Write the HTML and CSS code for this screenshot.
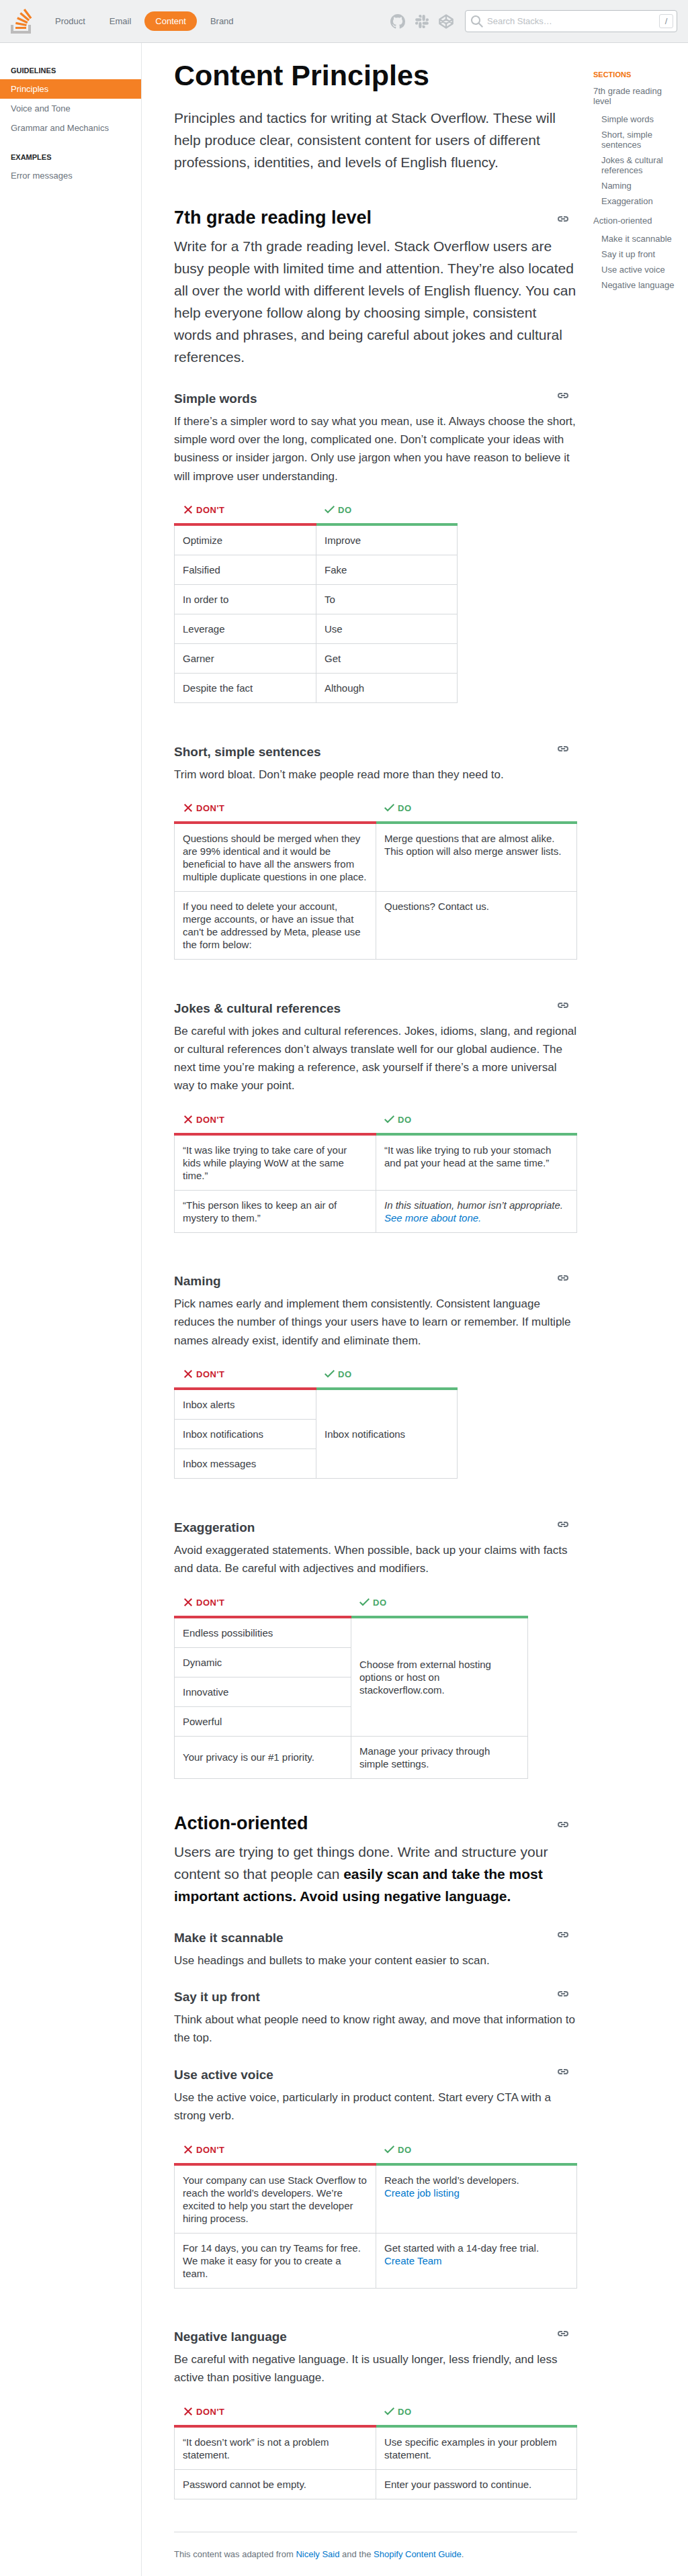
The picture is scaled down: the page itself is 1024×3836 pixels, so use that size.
FILE: index.html
```html
<!DOCTYPE html>
<html lang="en">
<head>
<meta charset="utf-8">
<title>Content Principles</title>
<link rel="stylesheet" href="styles.css">
</head>
<body>
<svg class="sprite" width="0" height="0" aria-hidden="true">
  <symbol id="link" viewBox="0 0 18 18"><path d="M2.9 9c0-1.16.94-2.1 2.1-2.1h3V5H5a4 4 0 100 8h3v-1.9H5A2.1 2.1 0 012.9 9zM13 5h-3v1.9h3a2.1 2.1 0 010 4.2h-3V13h3a4 4 0 000-8zm-7 5h6V8H6v2z"/></symbol>
  <symbol id="clear" viewBox="0 0 18 18"><path d="M15 4.41L13.59 3 9 7.59 4.41 3 3 4.41 7.59 9 3 13.59 4.41 15 9 10.41 13.59 15 15 13.59 10.41 9 15 4.41z"/></symbol>
  <symbol id="check" viewBox="0 0 18 18"><path d="M16 4.41L14.59 3 6 11.59 2.41 8 1 9.41l5 5 10-10z"/></symbol>
</svg>

<header class="topbar">
  <a class="logo" href="#">
    <svg width="32" height="37" viewBox="0 0 32 37"><path d="M26 33v-9h4v13H0V24h4v9h22z" fill="#bcbbbb"/><path d="M21.5 0l-2.7 2 9.9 13.3 2.7-2L21.5 0zM26 18.4L13.3 7.8l2.1-2.5 12.7 10.6-2.1 2.5zM9.1 15.2l15 7 1.4-3-15-7-1.4 3zm14 10.79l.68-2.95-16.1-3.35L7 23l16.1 2.99zM23 30H7v-3h16v3z" fill="#f48024"/></svg>
  </a>
  <nav class="topnav">
    <a href="#">Product</a>
    <a href="#">Email</a>
    <a class="is-selected" href="#">Content</a>
    <a href="#">Brand</a>
  </nav>
  <div class="social">
    <svg width="22" height="22" viewBox="0 0 16 16"><path fill="currentColor" d="M8 0C3.58 0 0 3.58 0 8c0 3.54 2.29 6.53 5.47 7.59.4.07.55-.17.55-.38 0-.19-.01-.82-.01-1.49-2.01.37-2.53-.49-2.69-.94-.09-.23-.48-.94-.82-1.13-.28-.15-.68-.52-.01-.53.63-.01 1.08.58 1.23.82.72 1.21 1.87.87 2.33.66.07-.52.28-.87.51-1.07-1.78-.2-3.64-.89-3.64-3.95 0-.87.31-1.59.82-2.15-.08-.2-.36-1.02.08-2.12 0 0 .67-.21 2.2.82.64-.18 1.32-.27 2-.27s1.36.09 2 .27c1.53-1.04 2.2-.82 2.2-.82.44 1.1.16 1.92.08 2.12.51.56.82 1.27.82 2.15 0 3.07-1.87 3.75-3.65 3.95.29.25.54.73.54 1.48 0 1.07-.01 1.93-.01 2.2 0 .21.15.46.55.38A8.01 8.01 0 0016 8c0-4.42-3.58-8-8-8z"/></svg>
    <svg width="20" height="20" viewBox="0 0 24 24"><path fill="currentColor" d="M5.04 15.16a2.53 2.53 0 11-2.52-2.52h2.52v2.52zm1.27 0a2.53 2.53 0 015.05 0v6.32a2.53 2.53 0 01-5.05 0v-6.32zM8.83 5.04a2.53 2.53 0 112.53-2.52v2.52H8.83zm0 1.27a2.53 2.53 0 010 5.05H2.52a2.53 2.53 0 010-5.05h6.31zM18.96 8.83a2.53 2.53 0 112.52 2.53h-2.52V8.83zm-1.27 0a2.53 2.53 0 01-5.05 0V2.52a2.53 2.53 0 015.05 0v6.31zM15.17 18.96a2.53 2.53 0 11-2.53 2.52v-2.52h2.53zm0-1.27a2.53 2.53 0 010-5.05h6.31a2.53 2.53 0 010 5.05h-6.31z"/></svg>
    <svg width="22" height="22" viewBox="0 0 24 24"><path fill="none" stroke="currentColor" stroke-width="2.4" stroke-linejoin="round" d="M12 1.6l10.6 6.9v7L12 22.4 1.4 15.500v-7L12 1.600zM12 22.400v-6.900M22.600 8.500L12 15.500 1.400 8.500M1.400 15.500L12 8.500l10.600 7M12 1.600v6.900"/></svg>
  </div>
  <div class="search">
    <svg width="18" height="18" viewBox="0 0 18 18"><path fill="currentColor" d="M18 16.500l-5.140-5.180h-.35a7 7 0 10-1.190 1.190v.35L16.500 18l1.500-1.500zM12 7A5 5 0 112 7a5 5 0 0110 0z"/></svg>
    <span class="search-hint">Search Stacks…</span>
    <kbd>/</kbd>
  </div>
</header>

<div class="layout">
  <nav class="sidebar">
    <h6>GUIDELINES</h6>
    <a class="is-selected" href="#">Principles</a>
    <a href="#">Voice and Tone</a>
    <a href="#">Grammar and Mechanics</a>
    <h6>EXAMPLES</h6>
    <a href="#">Error messages</a>
  </nav>

  <main class="content">
    <h1>Content Principles</h1>
    <p class="lead">Principles and tactics for writing at Stack Overflow. These will help produce clear, consistent content for users of different professions, identities, and levels of English fluency.</p>

    <div class="heading"><h2>7th grade reading level</h2><svg><use href="#link"/></svg></div>
    <p class="lead">Write for a 7th grade reading level. Stack Overflow users are busy people with limited time and attention. They’re also located all over the world with different levels of English fluency. You can help everyone follow along by choosing simple, consistent words and phrases, and being careful about jokes and cultural references.</p>

    <div class="heading sub after-lead"><h3>Simple words</h3><svg><use href="#link"/></svg></div>
    <p>If there’s a simpler word to say what you mean, use it. Always choose the short, simple word over the long, complicated one. Don’t complicate your ideas with business or insider jargon. Only use jargon when you have reason to believe it will improve user understanding.</p>
    <table class="narrow">
      <thead><tr><th class="dont"><span><svg><use href="#clear"/></svg>DON'T</span></th><th class="do"><span><svg><use href="#check"/></svg>DO</span></th></tr></thead>
      <tbody>
        <tr><td>Optimize</td><td>Improve</td></tr>
        <tr><td>Falsified</td><td>Fake</td></tr>
        <tr><td>In order to</td><td>To</td></tr>
        <tr><td>Leverage</td><td>Use</td></tr>
        <tr><td>Garner</td><td>Get</td></tr>
        <tr><td>Despite the fact</td><td>Although</td></tr>
      </tbody>
    </table>

    <div class="heading sub after-table"><h3>Short, simple sentences</h3><svg><use href="#link"/></svg></div>
    <p>Trim word bloat. Don’t make people read more than they need to.</p>
    <table>
      <thead><tr><th class="dont"><span><svg><use href="#clear"/></svg>DON'T</span></th><th class="do"><span><svg><use href="#check"/></svg>DO</span></th></tr></thead>
      <tbody>
        <tr><td>Questions should be merged when they are 99% identical and it would be beneficial to have all the answers from multiple duplicate questions in one place.</td><td>Merge questions that are almost alike. This option will also merge answer lists.</td></tr>
        <tr><td>If you need to delete your account, merge accounts, or have an issue that can't be addressed by Meta, please use the form below:</td><td>Questions? Contact us.</td></tr>
      </tbody>
    </table>

    <div class="heading sub after-table"><h3>Jokes &amp; cultural references</h3><svg><use href="#link"/></svg></div>
    <p>Be careful with jokes and cultural references. Jokes, idioms, slang, and regional or cultural references don’t always translate well for our global audience. The next time you’re making a reference, ask yourself if there’s a more universal way to make your point.</p>
    <table>
      <thead><tr><th class="dont"><span><svg><use href="#clear"/></svg>DON'T</span></th><th class="do"><span><svg><use href="#check"/></svg>DO</span></th></tr></thead>
      <tbody>
        <tr><td>“It was like trying to take care of your kids while playing WoW at the same time.”</td><td>“It was like trying to rub your stomach and pat your head at the same time.”</td></tr>
        <tr><td>“This person likes to keep an air of mystery to them.”</td><td><em>In this situation, humor isn’t appropriate. <a href="#">See more about tone.</a></em></td></tr>
      </tbody>
    </table>

    <div class="heading sub after-table"><h3>Naming</h3><svg><use href="#link"/></svg></div>
    <p>Pick names early and implement them consistently. Consistent language reduces the number of things your users have to learn or remember. If multiple names already exist, identify and eliminate them.</p>
    <table class="narrow centered">
      <thead><tr><th class="dont"><span><svg><use href="#clear"/></svg>DON'T</span></th><th class="do"><span><svg><use href="#check"/></svg>DO</span></th></tr></thead>
      <tbody>
        <tr><td>Inbox alerts</td><td rowspan="3">Inbox notifications</td></tr>
        <tr><td>Inbox notifications</td></tr>
        <tr><td>Inbox messages</td></tr>
      </tbody>
    </table>

    <div class="heading sub after-table"><h3>Exaggeration</h3><svg><use href="#link"/></svg></div>
    <p>Avoid exaggerated statements. When possible, back up your claims with facts and data. Be careful with adjectives and modifiers.</p>
    <table class="medium centered">
      <thead><tr><th class="dont"><span><svg><use href="#clear"/></svg>DON'T</span></th><th class="do"><span><svg><use href="#check"/></svg>DO</span></th></tr></thead>
      <tbody>
        <tr><td>Endless possibilities</td><td rowspan="4">Choose from external hosting options or host on stackoverflow.com.</td></tr>
        <tr><td>Dynamic</td></tr>
        <tr><td>Innovative</td></tr>
        <tr><td>Powerful</td></tr>
        <tr><td>Your privacy is our #1 priority.</td><td>Manage your privacy through simple settings.</td></tr>
      </tbody>
    </table>

    <div class="heading"><h2>Action-oriented</h2><svg><use href="#link"/></svg></div>
    <p class="lead">Users are trying to get things done. Write and structure your content so that people can <strong>easily scan and take the most important actions. Avoid using negative language.</strong></p>

    <div class="heading sub after-lead"><h3>Make it scannable</h3><svg><use href="#link"/></svg></div>
    <p>Use headings and bullets to make your content easier to scan.</p>

    <div class="heading sub"><h3>Say it up front</h3><svg><use href="#link"/></svg></div>
    <p>Think about what people need to know right away, and move that information to the top.</p>

    <div class="heading sub"><h3>Use active voice</h3><svg><use href="#link"/></svg></div>
    <p>Use the active voice, particularly in product content. Start every CTA with a strong verb.</p>
    <table>
      <thead><tr><th class="dont"><span><svg><use href="#clear"/></svg>DON'T</span></th><th class="do"><span><svg><use href="#check"/></svg>DO</span></th></tr></thead>
      <tbody>
        <tr><td>Your company can use Stack Overflow to reach the world’s developers. We’re excited to help you start the developer hiring process.</td><td>Reach the world’s developers.<br><a href="#">Create job listing</a></td></tr>
        <tr><td>For 14 days, you can try Teams for free. We make it easy for you to create a team.</td><td>Get started with a 14-day free trial.<br><a href="#">Create Team</a></td></tr>
      </tbody>
    </table>

    <div class="heading sub after-table"><h3>Negative language</h3><svg><use href="#link"/></svg></div>
    <p>Be careful with negative language. It is usually longer, less friendly, and less active than positive language.</p>
    <table>
      <thead><tr><th class="dont"><span><svg><use href="#clear"/></svg>DON'T</span></th><th class="do"><span><svg><use href="#check"/></svg>DO</span></th></tr></thead>
      <tbody>
        <tr><td>“It doesn’t work” is not a problem statement.</td><td>Use specific examples in your problem statement.</td></tr>
        <tr><td>Password cannot be empty.</td><td>Enter your password to continue.</td></tr>
      </tbody>
    </table>

    <footer>This content was adapted from <a href="#">Nicely Said</a> and the <a href="#">Shopify Content Guide</a>.</footer>
  </main>

  <nav class="toc">
    <h6>SECTIONS</h6>
    <a href="#">7th grade reading level</a>
    <div class="toc-sub">
      <a href="#">Simple words</a>
      <a href="#">Short, simple sentences</a>
      <a href="#">Jokes &amp; cultural references</a>
      <a href="#">Naming</a>
      <a href="#">Exaggeration</a>
    </div>
    <a href="#">Action-oriented</a>
    <div class="toc-sub">
      <a href="#">Make it scannable</a>
      <a href="#">Say it up front</a>
      <a href="#">Use active voice</a>
      <a href="#">Negative language</a>
    </div>
  </nav>
</div>
</body>
</html>
```
FILE: styles.css
```css
* { box-sizing: border-box; }

body {
  margin: 0;
  background: #fff;
  color: #3b4045;
  font: 13px/17px "Liberation Sans", Arial, sans-serif;
}

a { color: #0077cc; text-decoration: none; }
h1, h2, h3, h6, p { margin: 0; }
svg { display: block; flex: none; fill: currentColor; }
.sprite { position: absolute; }

/* Top bar */
.topbar {
  display: flex;
  align-items: center;
  height: 64px;
  padding: 0 16px;
  background: #eff0f1;
  border-bottom: 1px solid #d6d9dc;
}
.logo { width: 50px; }
.topnav { display: flex; gap: 4px; }
.topnav a {
  padding: 0 16px;
  border-radius: 15px;
  color: #6a737c;
  line-height: 29px;
}
.topnav .is-selected { background: #f48024; color: #fff; }
.social {
  display: flex;
  align-items: center;
  gap: 15px;
  margin-left: auto;
  margin-right: 17px;
  color: #bbc0c4;
}
.search {
  display: flex;
  align-items: center;
  width: 316px;
  height: 33px;
  padding: 0 5px 0 8px;
  background: #fff;
  border: 1px solid #bbc0c4;
  border-radius: 4px;
  color: #bbc0c4;
}
.search-hint { flex: 1; margin-left: 6px; }
kbd {
  width: 21px;
  height: 21px;
  border: 1px solid #d6d9dc;
  border-radius: 3px;
  color: #848d95;
  font: 13px/19px "Liberation Sans", Arial, sans-serif;
  text-align: center;
}

/* Page columns */
.layout {
  display: grid;
  grid-template-columns: 211px 648px 1fr;
  min-height: 3772px;
}

.sidebar { padding-top: 35px; border-right: 1px solid #e4e6e8; }
h6 { font-size: 11px; line-height: 12px; }
.sidebar h6 { margin: 0 0 7px 16px; color: #242729; }
.sidebar a + h6 { margin-top: 23px; }
.sidebar a {
  display: block;
  padding-left: 16px;
  color: #6a737c;
  line-height: 29px;
}
.sidebar .is-selected { background: #f48024; color: #fff; }

.toc {
  display: flex;
  flex-direction: column;
  width: 145px;
  padding: 41px 0 0 24px;
  line-height: 15px;
}
.toc a { color: #6a737c; }
.toc h6 { margin-bottom: 11px; color: #f2720c; }
.toc-sub {
  display: flex;
  flex-direction: column;
  gap: 8px;
  margin: 12px 0 14px;
  padding-left: 12px;
}

/* Article */
.content { padding: 24px 0 0 48px; }
h1, h2, strong { color: #0c0d0e; }
h1 { margin-bottom: 23px; font-size: 43px; line-height: 48px; }
h2 { font-size: 27px; line-height: 30px; }
h3 { font-size: 19px; line-height: 21px; }
p { font-size: 17px; line-height: 27.2px; }
.lead { font-size: 21px; line-height: 33px; }

.heading {
  display: flex;
  justify-content: space-between;
  margin: 51px 0 11px;
  padding-right: 12px;
}
.heading svg { width: 18px; height: 18px; margin-top: 8px; color: #6a737c; }
.heading.sub { height: 21px; margin: 30.4px 0 10px; }
.heading.sub svg { margin-top: -3px; }
.heading.after-lead { margin-top: 35px; }
.heading.after-table { margin-top: 61.2px; }

/* Do / don't tables */
table {
  width: 600px;
  margin-top: 17.6px;
  table-layout: fixed;
  border-collapse: separate;
  border-spacing: 0;
  font-size: 15px;
  line-height: 19px;
}
.narrow { width: 422px; }
.medium { width: 527px; }
th {
  padding: 12px;
  border-bottom: 4px solid;
  font-size: 13px;
  line-height: 15px;
  letter-spacing: .5px;
  text-align: left;
}
th:first-child { width: 301px; padding-left: 13px; }
.narrow th:first-child { width: 212px; }
.medium th:first-child { width: 264px; }
th span { display: flex; align-items: center; height: 15px; }
th svg { width: 18px; height: 18px; margin: -1px 3px 0 -1px; }
.dont { border-color: #dc3c4b; color: #c91d2e; }
.do { border-color: #5eba7d; color: #48a868; }
td {
  padding: 12px;
  border: solid #d6d9dc;
  border-width: 0 1px 1px 0;
  vertical-align: top;
}
tr td:first-child { border-left-width: 1px; }
.centered td { vertical-align: middle; }

footer {
  margin-top: 48px;
  padding: 24px 0;
  border-top: 1px solid #d6d9dc;
  color: #6a737c;
}
```
